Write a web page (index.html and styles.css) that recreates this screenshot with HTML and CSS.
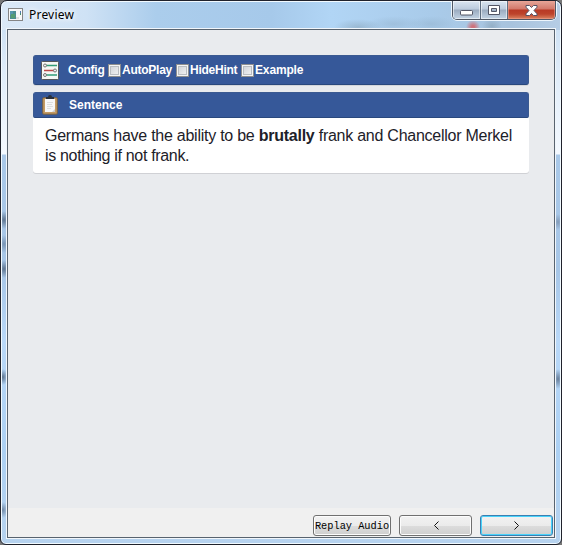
FILE: index.html
```html
<!DOCTYPE html>
<html lang="en">
<head>
<meta charset="utf-8">
<title>Preview</title>
<link rel="stylesheet" href="styles.css">
</head>
<body>
<div class="window">
  <header class="titlebar">
    <svg class="app-icon" width="15" height="13" viewBox="0 0 15 13">
      <rect x=".5" y=".5" width="14" height="12" fill="#f8f8f8" stroke="#858585"/>
      <rect x="2" y="3" width="6" height="8" fill="#4d8d91"/>
      <rect x="2" y="3" width="3" height="4" fill="#5797ae"/>
      <rect x="3" y="6" width="4" height="4" fill="#559c72"/>
      <rect x="8" y="9" width="3" height="2" fill="#ddd"/>
      <rect x="12" y="3" width="1" height="4" fill="#468d72"/>
      <rect x="12" y="3" width="1" height="2" fill="#5277b5"/>
    </svg>
    <span class="title">Preview</span>
    <div class="controls">
      <span class="control min"><svg width="13" height="6"><rect x=".5" y=".5" width="12" height="4.5" rx="1" fill="#fff" stroke="#535666"/></svg></span>
      <span class="control max"><svg width="12" height="10"><path fill-rule="evenodd" d="M.5.5h11v9H.5zM3.500 3.500v3h5v-3z" fill="#fff" stroke="#535666"/></svg></span>
      <span class="control close"><svg width="13" height="11" viewBox="0 0 13 11"><path d="M1 .5h3.500l2 2 2-2H12v1.700L9 5.500l3 3.300v1.700H8.500l-2-2-2 2H1V8.800l3-3.300-3-3.300z" fill="#fff" stroke="#565365"/></svg></span>
    </div>
  </header>
  <main class="client">
    <div class="page">
      <section class="config bar">
        <svg class="config-icon" width="18" height="19" viewBox="0 0 18 19">
          <rect x=".5" y=".5" width="17" height="18" rx="1" fill="#f7f7f5" stroke="#56575b"/>
          <g stroke-width="1.500" fill="none"><path d="M5 4.500h11M5 14h11" stroke="#339d78"/><path d="M3 9.500h11" stroke="#bc4a4a"/></g>
          <g fill="#eee" stroke="#777"><circle cx="4" cy="4.500" r="1.500"/><circle cx="14" cy="9.500" r="1.500"/><circle cx="4" cy="14" r="1.500"/></g>
        </svg>
        <span class="config-label">Config</span>
        <label class="option autoplay"><input type="checkbox">AutoPlay</label>
        <label class="option hidehint"><input type="checkbox">HideHint</label>
        <label class="option"><input type="checkbox">Example</label>
      </section>
      <section class="card">
        <h2 class="bar heading">
          <svg class="clip-icon" width="16" height="20" viewBox="0 0 16 20">
            <rect x=".7" y="2.700" width="14.600" height="16.500" rx="1" fill="#c49a62" stroke="#766044"/>
            <path d="M3 4h10v13H3z" fill="#f7f7f7"/>
            <path d="M4 4V2h2q0-2 2-2t2 2h2v2z" fill="#29303b"/>
            <path d="M5 7.500h6M5 9.500h5M5 11.500h6M5 13.500h4" stroke="#ddd"/>
            <path d="M10 17l3-3v3z" fill="#ccc"/>
          </svg>
          <span>Sentence</span>
        </h2>
        <p class="sentence"><span class="l1">Germans have the ability to be <b>brutally</b> frank and Chancellor Merkel</span><br><span class="l2">is nothing if not frank.</span></p>
      </section>
    </div>
    <footer class="actions">
      <button class="btn replay">Replay Audio</button>
      <button class="btn"><svg width="6" height="9"><path d="M5.500.5l-4 4 4 4" fill="none" stroke="#111"/></svg></button>
      <button class="btn focused"><svg width="6" height="9"><path d="M.5.5l4 4-4 4" fill="none" stroke="#111"/></svg></button>
    </footer>
  </main>
</div>
</body>
</html>
```
FILE: styles.css
```css
* { box-sizing: border-box; }
body { margin: 0; background: #777; overflow: hidden; font-family: "Liberation Sans", Arial, sans-serif; }
.window {
  position: relative;
  width: 562px;
  height: 545px;
  padding: 0 5px 5px;
  border: 1px solid #20222c;
  border-radius: 7px 7px 6px 6px;
  box-shadow: inset 0 0 0 1px #f2faff;
  background:
    radial-gradient(ellipse 7px 7px at 472px 26px, #ce737d 20%, transparent),
    radial-gradient(ellipse 24px 8px at 357px 26px, #829caf77, transparent),
    radial-gradient(ellipse 28px 8px at 393px 23px, #8dabc466, transparent),
    radial-gradient(ellipse 24px 8px at 430px 23px, #8dabc466, transparent),
    radial-gradient(ellipse 10px 8px at 491px 25px, #829caf88, transparent),
    radial-gradient(ellipse 6px 9px at 3px 219px, #5e7590, transparent),
    radial-gradient(ellipse 6px 9px at 3px 243px, #7793b3, transparent),
    radial-gradient(ellipse 6px 9px at 3px 268px, #5e7590, transparent),
    radial-gradient(ellipse 5px 8px at 2px 376px, #5e7590, transparent),
    radial-gradient(ellipse 5px 8px at 2px 509px, #718aa8, transparent),
    radial-gradient(ellipse 5px 8px at 557px 221px, #839bb8, transparent),
    radial-gradient(ellipse 5px 10px at 557px 378px, #667d99, transparent),
    linear-gradient(90deg, #dbe9f7 0, #cfe2f5 85px, #abcdec 155px, #a6c9ea 270px, #b1d5f5 330px, #a9cbea 430px, #a8c3dd 510px, #b6cde5) 0 0 / 100% 29px no-repeat,
    linear-gradient(#c3daf1 0, #dfecf9 70px, #f4f9ff 153px, #a9c8e8 154px, #a7c6e7 270px, #b9d8f8 340px, #acd0f3 450px, #b7d3ef);
}
.titlebar { display: flex; height: 27px; align-items: flex-start; }
.app-icon { margin: 7px 0 0 2px; }
.title {
  margin: 6px 0 0 6px;
  font: 12px/16px "Noto Sans", sans-serif;
  letter-spacing: .2px;
  text-shadow: 0 0 7px #fff, 0 0 5px #fff;
}
.controls {
  display: flex;
  width: 104px;
  height: 19px;
  margin: 0 0 0 auto;
  border: 1px solid #4f5765;
  border-top: 0;
  border-radius: 0 0 5px 5px;
  overflow: hidden;
  box-shadow: 0 1px 0 #edf5fc, 1px 0 0 #edf5fc, -1px 0 0 #edf5fc;
}
.control {
  display: flex;
  width: 28px;
  align-items: center;
  justify-content: center;
  border-right: 1px solid #5e6d80;
  box-shadow: inset 0 0 0 1px #ffffff88;
  background: linear-gradient(#dae5f1 0, #bccbdd 8px, #9babc0 9px, #c2d3e4);
}
.min { padding-top: 6px; }
.max { width: 27px; }
.close {
  width: 47px;
  border: 0;
  box-shadow: inset 0 0 0 1px #f0a29388;
  background: linear-gradient(#e5a699 0, #d3786a 8px, #b83925 9px, #bd432b 13px, #d98461);
}
.client {
  display: flex;
  flex-direction: column;
  width: 550px;
  height: 511px;
  border: 1px solid #f1f6fb;
  padding: 1px;
  background: #e9ebee;
  box-shadow: inset 0 0 0 1px #58636f;
}
.page { height: 478px; padding: 25px 25px 0 25px; }
.bar {
  background: #365899;
  border: 1px solid #3b5a91;
  border-bottom-color: #29487d;
  color: #fff;
  font-size: 12px;
  font-weight: bold;
}
.config {
  display: flex;
  height: 30px;
  align-items: center;
  padding-left: 7px;
  border-radius: 3px;
  box-shadow: 0 1px 0 #d4d6da;
}
.config-label { width: 36px; margin: 0 4px 0 9px; letter-spacing: -.25px; }
.option { display: flex; align-items: center; letter-spacing: -.15px; }
.autoplay { width: 68px; letter-spacing: -.25px; }
.hidehint { width: 65px; letter-spacing: -.25px; }
.option input {
  appearance: none;
  width: 13px;
  height: 13px;
  margin: 0 1px 0 0;
  border: 1px solid #8e8f8f;
  box-shadow: inset 0 0 0 1px #f4f4f4, inset 0 0 0 2px #b9bdc1;
  background: linear-gradient(135deg, #cbcfd5, #f6f6f6);
}
.card {
  height: 81px;
  margin-top: 7px;
  background: #fff;
  border-radius: 3px;
  box-shadow: 0 1px 0 #d0d1d5;
}
.heading {
  display: flex;
  height: 26px;
  align-items: center;
  margin: 0;
  padding-left: 8px;
  border-radius: 3px 3px 2px 2px;
}
.heading span { margin-left: 11px; }
.sentence { margin: 0; padding: 8px 0 0 12px; color: #1d2129; font-size: 16px; line-height: 20px; white-space: nowrap; }
.l1 { letter-spacing: -.25px; }
.l2 { letter-spacing: -.33px; }
.actions { display: flex; height: 29px; padding: 7px 1px 1px 305px; gap: 8px; background: #f0f0f0; }
.btn {
  display: flex;
  flex: none;
  width: 73px;
  height: 21px;
  align-items: center;
  justify-content: center;
  padding: 0;
  border: 1px solid #707070;
  border-radius: 3px;
  box-shadow: inset 0 0 0 1px #fcfcfc;
  background: linear-gradient(#f2f2f2 0, #ebebeb 50%, #ddd 51%, #cfcfcf);
  color: #000;
}
.replay { width: 78px; font: 10.3px/18px "Liberation Mono", monospace; white-space: pre; }
.focused { border-color: #3c7fb1; box-shadow: inset 0 0 0 1px #48d3fb; }
```
